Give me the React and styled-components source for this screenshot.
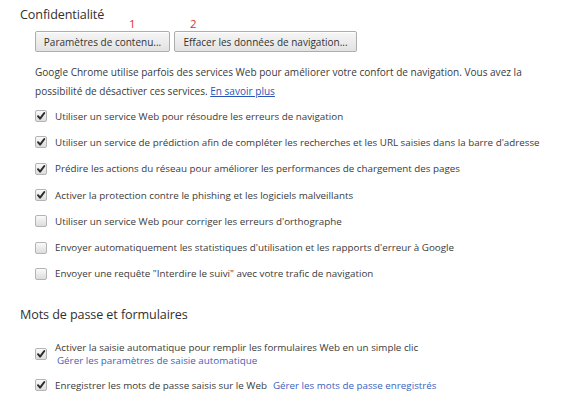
import React from "react";
import styled, { createGlobalStyle } from "styled-components";

const Global = createGlobalStyle`
  html, body { margin: 0; padding: 0; background: #fff; }
  body { font-family: "Open Sans", "Noto Sans", sans-serif; color: #333; }
`;

const Page = styled.div`
  padding: 7px 0 0 20px;
  width: 548px;
  box-sizing: border-box;
`;

const Heading = styled.div`
  font-size: 12.6px;
  line-height: 15px;
  color: #303030;
  letter-spacing: -0.1px;
  margin-top: ${(p) => p.$mt || 0}px;
`;

const Content = styled.div`
  padding-left: 15px;
`;

const ButtonRow = styled.div`
  position: relative;
  display: flex;
  gap: 4px;
  margin-top: 9px;
`;

const Marker = styled.span`
  position: absolute;
  top: -13px;
  left: ${(p) => p.$x}px;
  color: #e0302c;
  font-size: 11.5px;
  line-height: 12px;
`;

const Button = styled.button`
  height: 21px;
  padding: 0;
  border: 1px solid #adadad;
  border-radius: 2px;
  background: linear-gradient(#f6f6f6, #e2e2e2);
  font-family: inherit;
  font-size: 10px;
  color: #333;
  white-space: nowrap;
  width: ${(p) => p.$w}px;
  box-shadow: inset 0 1px 0 #fff;
`;

const Para = styled.p`
  margin: 11px 0 0;
  font-size: 10.05px;
  line-height: 18.5px;
  color: #3a3a3a;
  white-space: nowrap;
`;

const Link = styled.a`
  color: ${(p) => (p.$plain ? "#3b5fc0" : "#2a55b8")};
  text-decoration: ${(p) => (p.$plain ? "none" : "underline")};
  margin-left: ${(p) => p.$ml || 0}px;
`;

const List = styled.div`
  margin-top: ${(p) => p.$mt || 0}px;
  display: flex;
  flex-direction: column;
`;

const Row = styled.div`
  display: flex;
  align-items: center;
  gap: 8px;
  min-height: ${(p) => (p.$h ? p.$h : 26.3)}px;
  font-size: 9.8px;
  color: #3a3a3a;
  white-space: nowrap;
`;

const Box = styled.span`
  flex: none;
  width: 12px;
  height: 12px;
  border: 1px solid #b4b4b4;
  border-radius: 2px;
  background: linear-gradient(#fafafa, #dcdcdc);
  display: flex;
  align-items: center;
  justify-content: center;
  box-sizing: border-box;
`;

const Lines = styled.div`
  display: flex;
  flex-direction: column;
  line-height: 13px;
`;

const Sub = styled.div`
  padding-left: 2px;
`;

function Check({ on }) {
  return (
    <Box>
      {on && (
        <svg width="10" height="10" viewBox="0 0 10 10">
          <path d="M2 5.2 L4.1 7.6 L8.3 2" fill="none" stroke="#2b2b2b" strokeWidth="2" strokeLinecap="round" strokeLinejoin="round" />
        </svg>
      )}
    </Box>
  );
}

const privacy = [
  [true, "Utiliser un service Web pour résoudre les erreurs de navigation"],
  [true, "Utiliser un service de prédiction afin de compléter les recherches et les URL saisies dans la barre d'adresse"],
  [true, "Prédire les actions du réseau pour améliorer les performances de chargement des pages"],
  [true, "Activer la protection contre le phishing et les logiciels malveillants"],
  [false, "Utiliser un service Web pour corriger les erreurs d'orthographe"],
  [false, "Envoyer automatiquement les statistiques d'utilisation et les rapports d'erreur à Google"],
  [false, "Envoyer une requête \"Interdire le suivi\" avec votre trafic de navigation"],
];

export default function App() {
  return (
    <>
      <Global />
      <Page>
        <Heading>Confidentialité</Heading>
        <Content>
          <ButtonRow>
            <Marker $x={94}>1</Marker>
            <Marker $x={155}>2</Marker>
            <Button $w={135}>Paramètres de contenu...</Button>
            <Button $w={183}>Effacer les données de navigation...</Button>
          </ButtonRow>
          <Para>
            Google Chrome utilise parfois des services Web pour améliorer votre confort de navigation. Vous avez la
            <br />
            possibilité de désactiver ces services. <Link href="#">En savoir plus</Link>
          </Para>
          <List $mt={3}>
            {privacy.map(([on, t]) => (
              <Row key={t}>
                <Check on={on} />
                <span>{t}</span>
              </Row>
            ))}
          </List>
        </Content>
        <Heading $mt={20}>Mots de passe et formulaires</Heading>
        <Content>
          <List $mt={19}>
            <Row $h={26}>
              <Check on />
              <Lines>
                <span>Activer la saisie automatique pour remplir les formulaires Web en un simple clic</span>
                <Sub>
                  <Link $plain href="#">Gérer les paramètres de saisie automatique</Link>
                </Sub>
              </Lines>
            </Row>
            <Row $h={36}>
              <Check on />
              <span>
                Enregistrer les mots de passe saisis sur le Web
                <Link $plain $ml={6} href="#">Gérer les mots de passe enregistrés</Link>
              </span>
            </Row>
          </List>
        </Content>
      </Page>
    </>
  );
}
